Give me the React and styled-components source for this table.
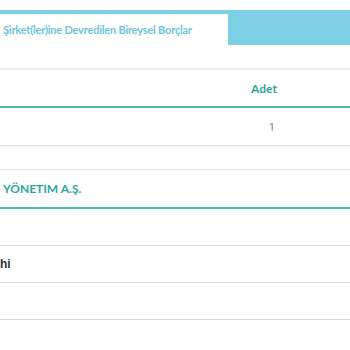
import React from "react";
import styled, { createGlobalStyle } from "styled-components";

const Global = createGlobalStyle`
  html, body { margin: 0; padding: 0; background: #fff; }
  body { font-family: Lato, "Open Sans", sans-serif; }
`;

const Page = styled.div`
  width: 350px;
  padding-top: 10px;
`;

const TabBar = styled.div`
  display: flex;
  height: 35px;
  background: #7dcfe3;
`;

const Tab = styled.div`
  width: 228px;
  margin-top: 4px;
  background: #fff;
  display: flex;
  align-items: center;
  padding-left: 3px;
  box-sizing: border-box;
  font-weight: 700;
  font-size: 11px;
  letter-spacing: -0.2px;
  color: #6cc4dc;
  white-space: nowrap;
`;

const Table = styled.div`
  margin-top: ${(p) => p.$gap}px;
  border-top: ${(p) => p.$top}px solid ${(p) => (p.$top > 1 ? "#ececec" : "#dedede")};
`;

const HeadRow = styled.div`
  display: grid;
  grid-template-columns: 228px 72px 1fr;
  height: ${(p) => p.$h || 36}px;
  align-items: center;
  border-bottom: 2px solid #4db8ab;
  font-weight: 700;
  font-size: 12px;
  color: #2da79a;
`;

const Row = styled.div`
  display: grid;
  grid-template-columns: 228px 72px 1fr;
  height: ${(p) => p.$h || 36}px;
  align-items: center;
  border-bottom: 1px solid #dcdcdc;
  font-size: 12px;
`;

const Cell = styled.div`
  padding-left: ${(p) => p.$pl || 0}px;
  padding-right: ${(p) => p.$pr || 0}px;
  text-align: ${(p) => p.$align || "left"};
  white-space: nowrap;
`;

const Count = styled(Cell)`
  color: #7a7a7a;
  font-family: "Open Sans", sans-serif;
  font-size: 11px;
`;

const Name = styled(Cell)`
  color: #333;
  font-family: "Liberation Sans", Arial, sans-serif;
  font-weight: 700;
  font-size: 12px;
`;

export default function App() {
  return (
    <>
      <Global />
      <Page>
        <TabBar>
          <Tab>Şirket(ler)ine Devredilen Bireysel Borçlar</Tab>
        </TabBar>

        <Table $gap={23} $top={2}>
          <HeadRow>
            <Cell />
            <Cell $align="center">Adet</Cell>
            <Cell />
          </HeadRow>
          <Row $h={37}>
            <Cell />
            <Count $align="right" $pr={25}>1</Count>
            <Cell />
          </Row>
        </Table>

        <Table $gap={23} $top={1}>
          <HeadRow $h={37}>
            <Cell $pl={3}>YÖNETIM A.Ş.</Cell>
            <Cell />
            <Cell />
          </HeadRow>
          <Row>
            <Cell />
          </Row>
          <Row>
            <Name>hi</Name>
          </Row>
          <Row>
            <Cell />
          </Row>
        </Table>
      </Page>
    </>
  );
}
